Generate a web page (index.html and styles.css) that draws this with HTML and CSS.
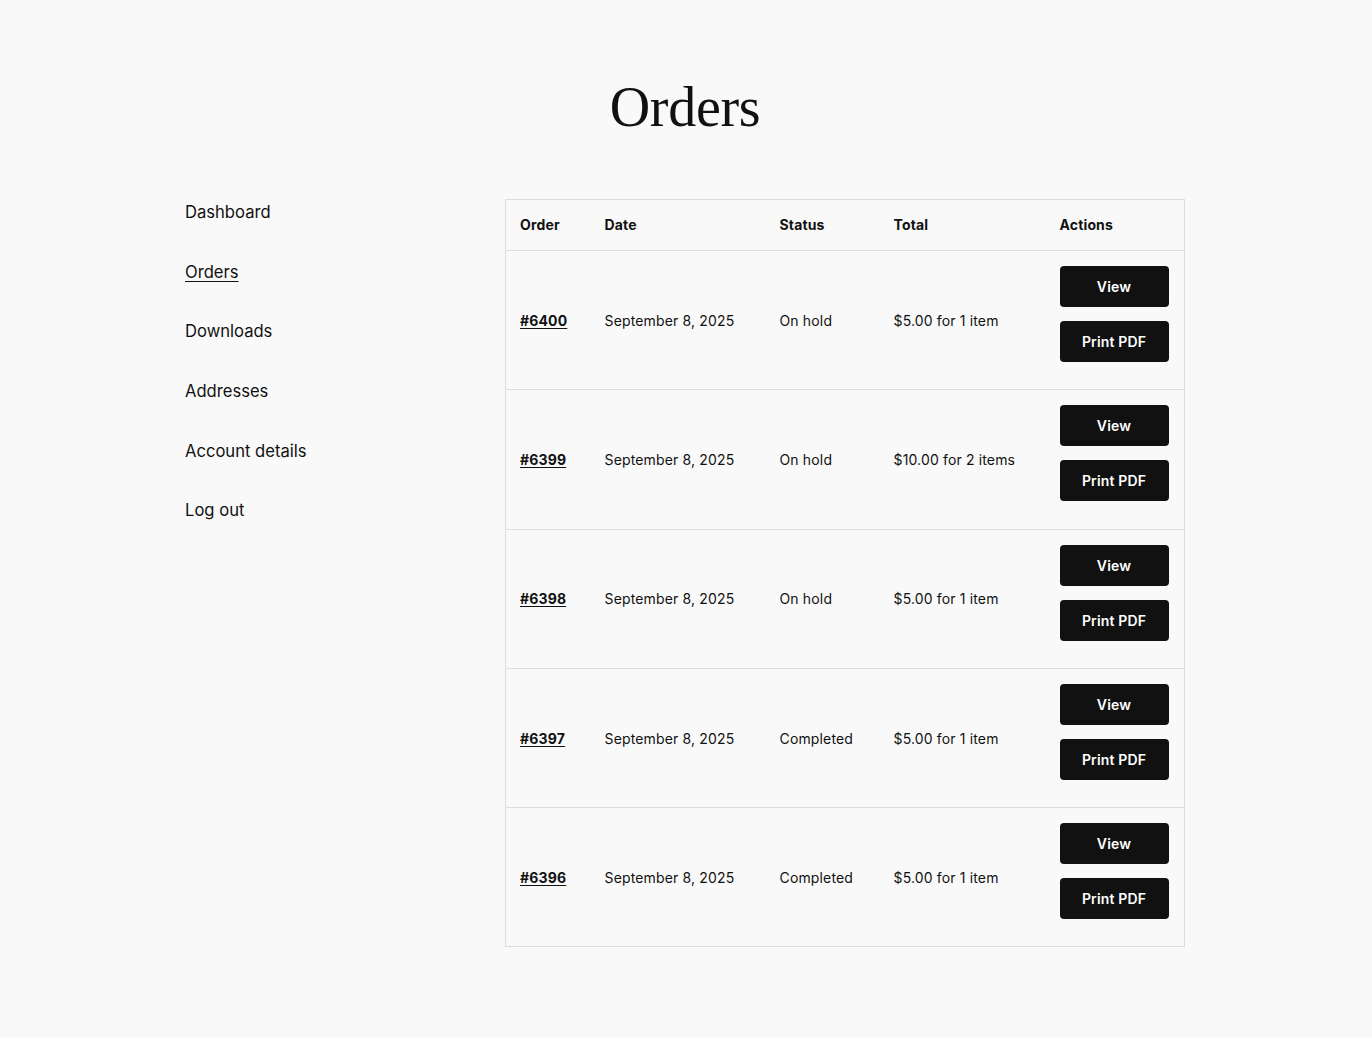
FILE: index.html
```html
<!DOCTYPE html>
<html lang="en">
<head>
<meta charset="utf-8">
<title>Orders</title>
<link rel="stylesheet" href="styles.css">
</head>
<body>
<main class="page">
  <h1 class="page-title">Orders</h1>
  <div class="account">
    <nav class="account-nav">
      <ul class="nav-list">
        <li><a href="#" class="nav-link">Dashboard</a></li>
        <li><a href="#" class="nav-link is-active">Orders</a></li>
        <li><a href="#" class="nav-link">Downloads</a></li>
        <li><a href="#" class="nav-link">Addresses</a></li>
        <li><a href="#" class="nav-link">Account details</a></li>
        <li><a href="#" class="nav-link">Log out</a></li>
      </ul>
    </nav>
    <div class="account-content">
      <table class="orders">
        <thead>
          <tr>
            <th class="col-order">Order</th>
            <th class="col-date">Date</th>
            <th class="col-status">Status</th>
            <th class="col-total">Total</th>
            <th class="col-actions">Actions</th>
          </tr>
        </thead>
        <tbody>
          <tr>
            <td><a href="#" class="order-link">#6400</a></td>
            <td>September 8, 2025</td>
            <td>On hold</td>
            <td>$5.00 for 1 item</td>
            <td class="actions"><div class="btns"><a href="#" class="btn">View</a><a href="#" class="btn">Print PDF</a></div></td>
          </tr>
          <tr>
            <td><a href="#" class="order-link">#6399</a></td>
            <td>September 8, 2025</td>
            <td>On hold</td>
            <td>$10.00 for 2 items</td>
            <td class="actions"><div class="btns"><a href="#" class="btn">View</a><a href="#" class="btn">Print PDF</a></div></td>
          </tr>
          <tr>
            <td><a href="#" class="order-link">#6398</a></td>
            <td>September 8, 2025</td>
            <td>On hold</td>
            <td>$5.00 for 1 item</td>
            <td class="actions"><div class="btns"><a href="#" class="btn">View</a><a href="#" class="btn">Print PDF</a></div></td>
          </tr>
          <tr>
            <td><a href="#" class="order-link">#6397</a></td>
            <td>September 8, 2025</td>
            <td>Completed</td>
            <td>$5.00 for 1 item</td>
            <td class="actions"><div class="btns"><a href="#" class="btn">View</a><a href="#" class="btn">Print PDF</a></div></td>
          </tr>
          <tr>
            <td><a href="#" class="order-link">#6396</a></td>
            <td>September 8, 2025</td>
            <td>Completed</td>
            <td>$5.00 for 1 item</td>
            <td class="actions"><div class="btns"><a href="#" class="btn">View</a><a href="#" class="btn">Print PDF</a></div></td>
          </tr>
        </tbody>
      </table>
    </div>
  </div>
</main>
</body>
</html>
```
FILE: styles.css
```css
html, body {
  margin: 0;
  padding: 0;
  background: #f9f9f9;
  color: #111111;
  font-family: Inter, "Noto Sans", sans-serif;
}

.page {
  width: 1000px;
  margin: 0 auto;
  padding: 74px 0 90px;
  position: relative;
  left: -1px;
}

.page-title {
  margin: 0 0 59px;
  text-align: center;
  font-family: "Liberation Serif", "DejaVu Serif", serif;
  font-weight: 400;
  font-size: 56px;
  line-height: 66px;
  letter-spacing: -0.3px;
}

.account {
  display: grid;
  grid-template-columns: 320px 680px;
  align-items: start;
}

.nav-list {
  list-style: none;
  margin: 0;
  padding: 0;
  display: flex;
  flex-direction: column;
  gap: 32.7px;
}

.nav-link {
  color: #111111;
  text-decoration: none;
  font-size: 16.6px;
  line-height: 27px;
  display: inline-block;
}

.nav-link.is-active {
  text-decoration: underline;
  text-underline-offset: 3px;
  text-decoration-thickness: 1px;
}

.orders {
  width: 680px;
  border-collapse: collapse;
  table-layout: fixed;
  border: 1px solid #dddddd;
  font-size: 14px;
  letter-spacing: 0.15px;
}

.orders th,
.orders td {
  box-sizing: border-box;
  text-align: left;
  padding: 0 14px;
  border-bottom: 1px solid #dddddd;
  vertical-align: middle;
}

.orders th {
  font-weight: 700;
  height: 51px;
  padding-bottom: 1px;
}

.col-order { width: 85px; }
.col-date { width: 175px; }
.col-status { width: 114px; }
.col-total { width: 166px; }
.col-actions { width: 139px; }

.orders td.actions {
  padding-top: 15px;
  padding-bottom: 27.3px;
}

.order-link {
  color: #111111;
  font-weight: 700;
  text-decoration: underline;
  text-underline-offset: 2px;
}

.btns {
  display: flex;
  flex-direction: column;
  gap: 14px;
}

.btn {
  display: flex;
  align-items: center;
  justify-content: center;
  height: 41px;
  width: 109px;
  box-sizing: border-box;
  background: #111111;
  color: #ffffff;
  border-radius: 4px;
  text-decoration: none;
  font-weight: 600;
  font-size: 14px;
}
```
